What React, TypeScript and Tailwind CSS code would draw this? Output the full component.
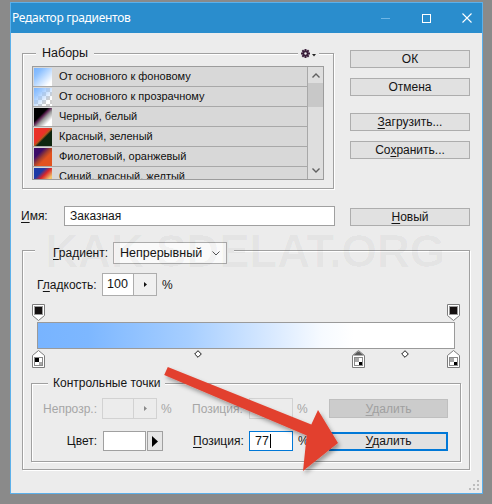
import React from "react";

const U = ({ children }: { children: React.ReactNode }) => (
  <span className="underline decoration-1 underline-offset-[2px]">{children}</span>
);

const presets = [
  { name: "От основного к фоновому", sw: "bg-[linear-gradient(135deg,#78b4ff_0%,#8cc0ff_25%,#ffffff_85%)]" },
  {
    name: "От основного к прозрачному",
    sw: "bg-[linear-gradient(135deg,#78b4ff_0%,#9cc8ff_25%,rgba(255,255,255,0)_75%),conic-gradient(#cfcfcf_25%,#ffffff_0_50%,#cfcfcf_0_75%,#ffffff_0)] bg-[length:100%_100%,8px_8px]",
  },
  { name: "Черный, белый", sw: "bg-[linear-gradient(135deg,#000_0%,#000_38%,#5a2050_46%,#9a9a9a_58%,#fff_80%)]" },
  { name: "Красный, зеленый", sw: "bg-[linear-gradient(135deg,#ea3128_0%,#ea3128_42%,#b8561c_50%,#0e2610_58%,#0e2610_100%)]" },
  { name: "Фиолетовый, оранжевый", sw: "bg-[linear-gradient(135deg,#3b0c68_0%,#3b0c68_28%,#a5402e_48%,#e2531f_62%,#e2531f_100%)]" },
  { name: "Синий, красный, желтый", sw: "bg-[linear-gradient(135deg,#1b3aa6_0%,#1b3aa6_30%,#d8262a_48%,#f1c36c_72%)]" },
];

function TopStop() {
  return (
    <svg width="13" height="17" viewBox="0 0 13 17">
      <path d="M0.5 0.5H12.5V11.5L6.5 16.5L0.5 11.5Z" fill="#ffffff" stroke="#7c7c7c" />
      <rect x="2.5" y="2.5" width="8" height="8" fill="#141010" stroke="#9a9a9a" />
    </svg>
  );
}

function BottomStop({ selected, dark }: { selected?: boolean; dark: "tl" | "br" }) {
  return (
    <svg width="13" height="18" viewBox="0 0 13 18">
      <path d="M6.5 0.5L12.5 5.5V17.5H0.5V5.5Z" fill="#ffffff" stroke="#7c7c7c" />
      {selected && <path d="M6.5 1.2L12 5.5H1Z" fill="#5a5a5a" />}
      <rect x="2.5" y="7.5" width="8" height="8" fill="#ffffff" stroke="#8a8a8a" />
      {dark === "tl" ? (
        <>
          <rect x="3" y="8" width="4" height="4" fill="#000" />
          <rect x="7" y="12" width="3" height="3" fill="#a8a8a8" />
        </>
      ) : (
        <>
          <rect x="3" y="8" width="4" height="4" fill="#a8a8a8" />
          <rect x="7" y="12" width="3" height="3" fill="#000" />
        </>
      )}
    </svg>
  );
}

function Diamond() {
  return (
    <svg width="8" height="8" viewBox="0 0 8 8">
      <path d="M4 0.7L7.3 4L4 7.3L0.7 4Z" fill="#ffffff" stroke="#1a1a1a" />
    </svg>
  );
}

function Gear() {
  return (
    <svg width="9" height="9" viewBox="0 0 9 9">
      <g fill="#3b1f3b">
        <rect x="3.5" y="0" width="2" height="9" />
        <rect x="0" y="3.5" width="9" height="2" />
        <rect x="3.5" y="0" width="2" height="9" transform="rotate(45 4.5 4.5)" />
        <rect x="3.5" y="0" width="2" height="9" transform="rotate(-45 4.5 4.5)" />
        <circle cx="4.5" cy="4.5" r="3" />
      </g>
      <circle cx="4.5" cy="4.5" r="1.2" fill="#ececec" />
    </svg>
  );
}

export default function App() {
  return (
    <div className="relative w-[492px] h-[504px] bg-[#8a8a8a] overflow-hidden font-['Liberation_Sans',Arial,sans-serif] text-[12px] text-[#141414]">
      <div className="ml-[10px] mt-[2px] w-[473px] h-[492px] border border-[#5cb0ea] flex flex-col">
        {/* title bar */}
        <div className="h-[30px] bg-[#2a8dcd] flex items-center pl-[1px] pr-[10px] text-white">
          <span className="font-['Noto_Sans',sans-serif] text-[12px] tracking-[-0.3px] leading-none">Редактор градиентов</span>
          <div className="ml-auto flex items-center">
            <div className="w-[9px] h-[1px] bg-[#6fb6e6] mt-[1px]" />
            <div className="ml-[32px] w-[9px] h-[9px] border border-white" />
            <svg className="ml-[31px]" width="10" height="10" viewBox="0 0 10 10">
              <path d="M0.5 0.5L9.5 9.5M9.5 0.5L0.5 9.5" stroke="#ffffff" strokeWidth="1.1" />
            </svg>
          </div>
        </div>

        {/* content */}
        <div className="relative flex-1 bg-[#ececec] pl-[11px] pr-[12px]">
          <div className="flex items-start">
            {/* Наборы */}
            <div className="mt-[20px] w-[312px] h-[136px] border border-[#a0a0a0] shadow-[1px_1px_0_#ffffff,inset_1px_1px_0_#ffffff]">
              <div className="-mt-[9px] h-[16px] flex items-center justify-between">
                <span className="ml-[13px] px-[6px] bg-[#ececec] leading-[16px] text-[12.5px]">Наборы</span>
                <span className="mr-[14px] px-[3px] bg-[#ececec] h-[16px] flex items-center gap-[2px]">
                  <Gear />
                  <svg width="4" height="3" viewBox="0 0 4 3" className="mt-[4px]">
                    <path d="M0 0H4L2 2.5Z" fill="#222" />
                  </svg>
                </span>
              </div>
              <div className="mt-[5px] ml-[9px] w-[292px] h-[114px] border border-[#9c9c9c] flex overflow-hidden bg-[#d8d8d8]">
                <div className="flex-1 flex flex-col">
                  {presets.map((p) => (
                    <div key={p.name} className="h-[20px] shrink-0 border-b border-[#a8a8a8] flex items-center bg-[#d8d8d8]">
                      <div className={`ml-[1px] w-[18px] h-[18px] ${p.sw}`} />
                      <span className="ml-[7px] text-[11px] text-[#101010]">{p.name}</span>
                    </div>
                  ))}
                </div>
                <div className="w-[16px] border-l border-[#a8a8a8] bg-[#dedede] flex flex-col items-center">
                  <svg className="mt-[6px]" width="8" height="5" viewBox="0 0 8 5">
                    <path d="M0.5 4.5L4 1L7.5 4.5" fill="none" stroke="#606060" strokeWidth="1.4" />
                  </svg>
                  <div className="mt-[5px] w-[15px] h-[24px] bg-[#c8c8c8]" />
                  <svg className="mt-auto mb-[6px]" width="8" height="5" viewBox="0 0 8 5">
                    <path d="M0.5 0.5L4 4L7.5 0.5" fill="none" stroke="#606060" strokeWidth="1.4" />
                  </svg>
                </div>
              </div>
            </div>

            {/* buttons */}
            <div className="ml-auto mt-[17px] w-[120px] flex flex-col">
              <div className="h-[18px] bg-[#e1e1e1] border border-[#adadad] flex items-center justify-center">ОК</div>
              <div className="mt-[10px] h-[18px] bg-[#e1e1e1] border border-[#adadad] flex items-center justify-center">Отмена</div>
              <div className="mt-[17px] h-[18px] bg-[#e1e1e1] border border-[#adadad] flex items-center justify-center">
                <span><U>З</U>агрузить...</span>
              </div>
              <div className="mt-[10px] h-[18px] bg-[#e1e1e1] border border-[#adadad] flex items-center justify-center">
                <span>Со<U>х</U>ранить...</span>
              </div>
            </div>
          </div>

          {/* name row */}
          <div className="mt-[17px] h-[20px] flex items-center">
            <span className="-ml-[1px] w-[43px]"><U>И</U>мя:</span>
            <div className="w-[271px] h-[20px] bg-white border border-[#a0a0a0] flex items-center pl-[5px]">Заказная</div>
            <div className="ml-auto mt-[1px] w-[120px] h-[18px] bg-[#e1e1e1] border border-[#adadad] flex items-center justify-center">
              <span><U>Н</U>овый</span>
            </div>
          </div>

          {/* gradient fieldset */}
          <div className="mt-[24px] w-[448px] h-[220px] border border-[#a0a0a0] shadow-[1px_1px_0_#ffffff,inset_1px_1px_0_#ffffff]">
            <div className="-mt-[9px] flex">
              <div className="ml-[12px] pl-[18px] pr-[7px] h-[22px] bg-[#ececec] flex items-center">
                <span><U>Г</U>радиент:</span>
                <div className="ml-[5px] w-[114px] h-[22px] bg-[#fafafa] border border-[#acacac] flex items-center pl-[6px] pr-[6px]">
                  <span className="text-[12.5px]">Непрерывный</span>
                  <svg className="ml-auto" width="8" height="5" viewBox="0 0 8 5">
                    <path d="M0.5 0.5L4 4L7.5 0.5" fill="none" stroke="#555" strokeWidth="1" />
                  </svg>
                </div>
              </div>
            </div>

            {/* smoothness */}
            <div className="mt-[9px] ml-[14px] h-[23px] flex items-center">
              <span className="w-[65px]">Г<U>л</U>адкость:</span>
              <div className="w-[55px] h-[23px] border border-[#adadad] bg-white flex">
                <div className="w-[30px] flex items-center pl-[4px] text-[12.5px]">100</div>
                <div className="flex-1 border-l border-[#adadad] bg-[#f0f0f0] flex items-center justify-center">
                  <svg width="3" height="5" viewBox="0 0 3 5"><path d="M0 0L3 2.5L0 5Z" fill="#111" /></svg>
                </div>
              </div>
              <span className="ml-[5px]">%</span>
            </div>

            {/* gradient bar */}
            <div className="relative mt-[8px] ml-[9px] w-[427px] h-[64px] pt-[18px]">
              <div className="ml-[5px] w-[418px] h-[27px] border border-[#9a9a9a] bg-[linear-gradient(to_right,#78b4ff_0%,#7db7ff_12%,#a6ceff_36%,#d8e9ff_56%,#f6faff_68%,#ffffff_76%)]" />
              <div className="absolute left-0 top-0"><TopStop /></div>
              <div className="absolute left-[415px] top-0"><TopStop /></div>
              <div className="absolute left-0 top-[46px]"><BottomStop dark="tl" /></div>
              <div className="absolute left-[320px] top-[46px]"><BottomStop selected dark="br" /></div>
              <div className="absolute left-[415px] top-[46px]"><BottomStop dark="br" /></div>
              <div className="absolute left-[162px] top-[46px]"><Diamond /></div>
              <div className="absolute left-[369px] top-[46px]"><Diamond /></div>
            </div>

            {/* control points */}
            <div className="mt-[15px] ml-[8px] w-[430px] h-[79px] border border-[#a0a0a0] shadow-[1px_1px_0_#ffffff,inset_1px_1px_0_#ffffff]">
              <div className="-mt-[9px] flex">
                <span className="ml-[16px] px-[5px] h-[16px] leading-[16px] bg-[#ececec]">Контрольные точки</span>
              </div>
              <div className="mt-[7px] h-[21px] flex items-center text-[#a6a6a6]">
                <span className="w-[70px] pr-[5px] text-right">Непрозр.:</span>
                <div className="w-[55px] h-[21px] border border-[#d2d2d2] bg-[#ececec] flex">
                  <div className="w-[30px]" />
                  <div className="flex-1 border-l border-[#d2d2d2] flex items-center justify-center">
                    <svg width="3" height="5" viewBox="0 0 3 5"><path d="M0 0L3 2.5L0 5Z" fill="#8a8a8a" /></svg>
                  </div>
                </div>
                <span className="w-[35px] pl-[4px]">%</span>
                <span className="w-[57px]">Позиция:</span>
                <div className="w-[44px] h-[21px] border border-[#d2d2d2] bg-[#ececec]" />
                <span className="w-[36px] pl-[4px]">%</span>
                <div className="w-[119px] h-[19px] bg-[#cccccc] border border-[#bfbfbf] flex items-center justify-center text-[#a0a0a0]">
                  <span><U>У</U>далить</span>
                </div>
              </div>
              <div className="mt-[12px] h-[20px] flex items-center">
                <span className="w-[71px] pr-[6px] text-right">Цвет:</span>
                <div className="w-[43px] h-[20px] border border-[#a0a0a0] bg-white" />
                <div className="ml-[1px] w-[16px] h-[20px] border border-[#a0a0a0] bg-[#e6e6e6] flex items-center justify-center">
                  <svg width="6" height="11" viewBox="0 0 6 11"><path d="M0 0L6 5.5L0 11Z" fill="#000" /></svg>
                </div>
                <span className="w-[30px]" />
                <span className="w-[56px]"><U>П</U>озиция:</span>
                <div className="w-[44px] h-[20px] border border-[#0078d7] bg-white flex items-center pl-[5px] text-[12.5px]">
                  77<span className="ml-[1px] w-[1px] h-[14px] bg-black" />
                </div>
                <span className="w-[36px] pl-[5px]">%</span>
                <div className="w-[119px] h-[19px] bg-[#e1e1e1] border-2 border-[#0078d7] flex items-center justify-center">
                  <span><U>У</U>далить</span>
                </div>
              </div>
            </div>
          </div>

          {/* resize grip */}
          <svg className="absolute right-[2px] bottom-[2px]" width="11" height="11" viewBox="0 0 11 11">
            <g fill="#bdbdbd">
              <rect x="8" y="0" width="2" height="2" />
              <rect x="4" y="4" width="2" height="2" />
              <rect x="8" y="4" width="2" height="2" />
              <rect x="0" y="8" width="2" height="2" />
              <rect x="4" y="8" width="2" height="2" />
              <rect x="8" y="8" width="2" height="2" />
            </g>
          </svg>

          {/* watermark */}
          <div className="pointer-events-none absolute left-[34px] top-[195px] text-[46px] leading-none font-bold tracking-[-0.4px] text-[rgba(0,0,0,0.03)] whitespace-nowrap">
            KAK SDELAT.ORG
          </div>
        </div>
      </div>

      {/* red arrow overlay */}
      <svg className="pointer-events-none absolute left-0 top-0" width="492" height="504" viewBox="0 0 492 504">
        <defs>
          <filter id="sh" x="-20%" y="-20%" width="140%" height="140%">
            <feDropShadow dx="2" dy="3" stdDeviation="2" floodColor="#000" floodOpacity="0.35" />
          </filter>
        </defs>
        <polygon
          points="167.8,366.9 311.3,424.5 318,410 338,443 303,471 306.7,435.5 164.2,375.1"
          fill="#e2412f"
          filter="url(#sh)"
        />
      </svg>
    </div>
  );
}
